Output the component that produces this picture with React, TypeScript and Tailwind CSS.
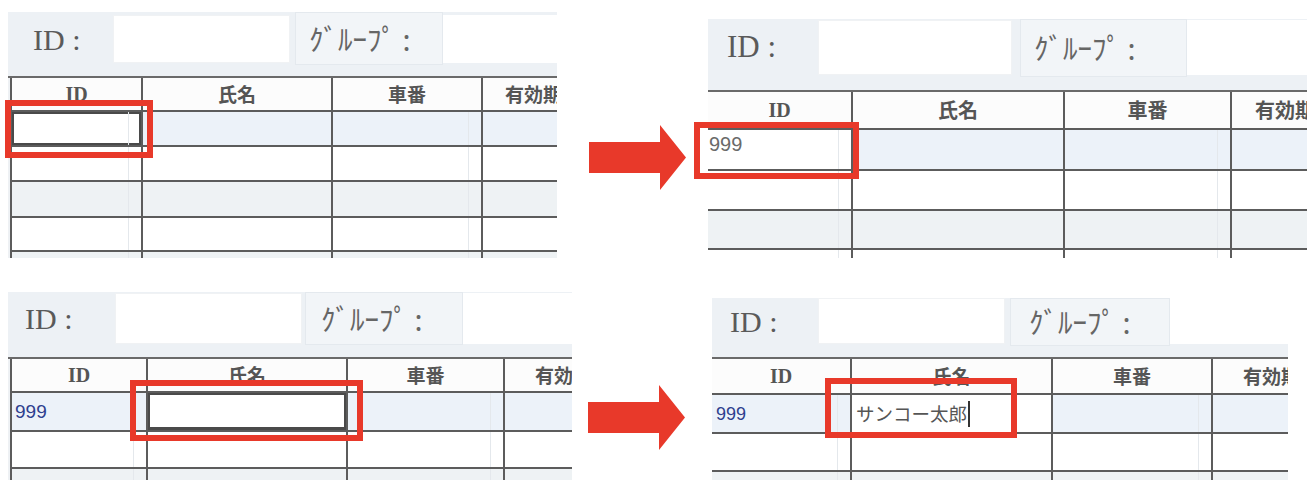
import React from "react";

const serif = { fontFamily: '"Liberation Serif", "Times New Roman", serif' };
const jp = { fontFamily: '"Noto Sans CJK JP", "Noto Sans", sans-serif' };
const sans = { fontFamily: '"Liberation Sans", Arial, sans-serif' };

type PanelProps = {
  outer: string;
  headH: string;
  labelFont: string;
  idLabelW: string;
  inputY: string;
  inputW: string;
  gapW: string;
  groupCls: string;
  leftLine: boolean;
  cols: string[];
  lastPad: string;
  headRow: string;
  headFont: string;
  rows: string[];
  red: string;
  focus: "id" | "name" | null;
  idCell?: React.ReactNode;
  nameCell?: React.ReactNode;
  idWhite?: boolean;
  nameWhite?: boolean;
};

const rowBg = ["bg-[#ecf2f9]", "bg-white", "bg-[#eef2f4]", "bg-white", "bg-[#eef2f4]"];

const Panel: React.FC<PanelProps> = (p) => {
  return (
    <div className={`relative shrink-0 ${p.outer}`}>
      <div className="w-full h-full overflow-hidden bg-[#e7ebef] flex flex-col">
        {/* search bar */}
        <div className={`flex shrink-0 bg-[#edf1f5] ${p.headH}`}>
          <div className={`flex items-center shrink-0 text-[#5a5a5a] ${p.idLabelW} ${p.inputY} ${p.labelFont}`} style={serif}>
            ID :
          </div>
          <div className={`shrink-0 bg-white border border-[#f0f2f4] ${p.inputW} ${p.inputY}`} />
          <div className={`shrink-0 ${p.gapW}`} />
          <div className={`shrink-0 flex items-center bg-[#f2f5f8] border border-[#e4e9ee] text-[#666] text-[29px] ${p.groupCls}`} style={jp}>
            ｸﾞﾙｰﾌﾟ :
          </div>
          <div className={`flex-1 bg-white ${p.inputY}`} />
        </div>

        {/* grid */}
        <div className={`flex-1 border-t-2 border-[#6a6a6a] ${p.leftLine ? "pl-[2px] bg-[#eef1f4]" : "bg-white"}`}>
          <div className={`h-full ${p.leftLine ? "border-l-2 border-[#5c5c5c]" : ""}`}>
            <div className={`flex border-b-2 border-[#5c5c5c] bg-[#fcfcfc] text-[#555] ${p.headRow}`}>
              <div className={`shrink-0 flex items-center justify-center border-r-2 border-[#5c5c5c] font-bold text-[20px] ${p.cols[0]}`} style={serif}>
                ID
              </div>
              <div className={`shrink-0 flex items-center justify-center border-r-2 border-[#5c5c5c] font-bold ${p.headFont} ${p.cols[1]}`} style={jp}>
                氏名
              </div>
              <div className={`shrink-0 flex items-center justify-center border-r-2 border-[#5c5c5c] font-bold ${p.headFont} ${p.cols[2]}`} style={jp}>
                車番
              </div>
              <div className={`shrink-0 flex items-center whitespace-nowrap font-bold ${p.headFont} ${p.cols[3]} ${p.lastPad}`} style={jp}>
                有効期限
              </div>
            </div>

            {p.rows.map((h, i) => (
              <div key={i} className={`flex border-b-2 border-[#5c5c5c] ${rowBg[i]} ${h}`}>
                <div
                  className={`shrink-0 flex items-center border-r-2 border-[#5c5c5c] ${p.cols[0]} ${
                    i === 0 && p.idWhite ? "bg-white" : ""
                  } ${i === 0 && p.focus === "id" ? "bg-white shadow-[inset_0_0_0_2px_#4a4a4a]" : ""}`}
                >
                  <div className="flex-1 h-full flex items-center border-r border-[#e4e8ec] mr-[12px]">
                    {i === 0 ? p.idCell : null}
                  </div>
                </div>
                <div
                  className={`shrink-0 flex items-center border-r-2 border-[#5c5c5c] ${p.cols[1]} ${
                    i === 0 && p.nameWhite ? "bg-white" : ""
                  } ${i === 0 && p.focus === "name" ? "bg-white shadow-[inset_2px_2px_0_0_#4a4a4a,inset_-2px_-3px_0_0_#4a4a4a]" : ""}`}
                >
                  {i === 0 ? p.nameCell : null}
                </div>
                <div className={`shrink-0 flex border-r-2 border-[#5c5c5c] ${p.cols[2]}`}>
                  <div className="flex-1 border-r border-[#e4e8ec] mr-[12px]" />
                </div>
                <div className={`shrink-0 ${p.cols[3]}`} />
              </div>
            ))}
          </div>
        </div>
      </div>
      <div className={`absolute border-[6px] border-[#e8392a] ${p.red}`} />
    </div>
  );
};

const Arrow: React.FC<{ cls: string }> = ({ cls }) => (
  <svg className={`shrink-0 ${cls}`} width="97" height="65" viewBox="0 0 97 65">
    <polygon points="0,17 71,17 71,0 97,32.5 71,65 71,48 0,48" fill="#e8392a" />
  </svg>
);

export default function App() {
  return (
    <div className="w-[1313px] h-[483px] bg-white overflow-hidden flex flex-col">
      <div className="flex items-start h-[258px] shrink-0">
        <Panel
          outer="ml-[8px] mt-[12px] w-[549px] h-[246px]"
          headH="h-[64px]"
          labelFont="text-[30px]"
          idLabelW="w-[105px] pl-[25px]"
          inputY="mt-[3px] h-[48px]"
          inputW="w-[177px]"
          gapW="w-[5px]"
          groupCls="w-[148px] h-[53px] pl-[13px]"
          leftLine
          cols={["w-[131px]", "w-[190px]", "w-[150px]", "w-[120px]"]}
          lastPad="pl-[22px]"
          headRow="h-[34px]"
          headFont="text-[19px]"
          rows={["h-[35px]", "h-[35px]", "h-[36px]", "h-[34px]", "h-[35px]"]}
          red="-left-[3px] top-[88px] w-[148px] h-[58px]"
          focus="id"
        />
        <Arrow cls="ml-[32px] mt-[125px]" />
        <Panel
          outer="ml-[22px] mt-[19px] w-[599px] h-[239px]"
          headH="h-[71px]"
          labelFont="text-[31px]"
          idLabelW="w-[110px] pl-[19px]"
          inputY="mt-[1px] h-[55px]"
          inputW="w-[194px]"
          gapW="w-[8px]"
          groupCls="w-[167px] h-[58px] pl-[13px]"
          leftLine={false}
          cols={["w-[145px]", "w-[212px]", "w-[167px]", "w-[120px]"]}
          lastPad="pl-[23px]"
          headRow="h-[38px]"
          headFont="text-[20px]"
          rows={["h-[41px]", "h-[40px]", "h-[39px]", "h-[40px]"]}
          red="-left-[14px] top-[103px] w-[165px] h-[57px]"
          focus={null}
          idWhite
          idCell={
            <span className="self-start pt-[4px] pl-[1px] text-[20px] leading-none text-[#6a6a6a]" style={sans}>
              999
            </span>
          }
        />
      </div>

      <div className="flex items-start h-[225px] shrink-0">
        <Panel
          outer="ml-[8px] mt-[34px] w-[564px] h-[188px]"
          headH="h-[65px]"
          labelFont="text-[30px]"
          idLabelW="w-[107px] pl-[17px]"
          inputY="mt-[1px] h-[51px]"
          inputW="w-[187px]"
          gapW="w-[3px]"
          groupCls="w-[158px] h-[53px] pl-[15px]"
          leftLine
          cols={["w-[136px]", "w-[200px]", "w-[157px]", "w-[120px]"]}
          lastPad="pl-[30px]"
          headRow="h-[34px]"
          headFont="text-[19px]"
          rows={["h-[39px]", "h-[37px]", "h-[38px]"]}
          red="left-[122px] top-[88px] w-[233px] h-[61px]"
          focus="name"
          idCell={
            <span className="pl-[3px] text-[19px] leading-none text-[#2e3f8f]" style={sans}>
              999
            </span>
          }
        />
        <Arrow cls="ml-[16px] mt-[127px]" />
        <Panel
          outer="ml-[27px] mt-[40px] w-[576px] h-[182px]"
          headH="h-[59px]"
          labelFont="text-[30px]"
          idLabelW="w-[106px] pl-[18px]"
          inputY="mt-[0px] h-[46px]"
          inputW="w-[187px]"
          gapW="w-[5px]"
          groupCls="w-[160px] h-[48px] pl-[18px]"
          leftLine={false}
          cols={["w-[140px]", "w-[201px]", "w-[160px]", "w-[120px]"]}
          lastPad="pl-[30px]"
          headRow="h-[36px]"
          headFont="text-[19px]"
          rows={["h-[39px]", "h-[38px]", "h-[38px]"]}
          red="left-[113px] top-[80px] w-[192px] h-[60px]"
          focus={null}
          nameWhite
          idCell={
            <span className="pl-[4px] text-[18px] leading-none text-[#2e3f8f]" style={sans}>
              999
            </span>
          }
          nameCell={
            <div className="flex items-center pl-[4px]">
              <span className="text-[18.5px] leading-none text-[#555]" style={jp}>
                サンコー太郎
              </span>
              <span className="ml-[1px] w-[2px] h-[26px] bg-[#333]" />
            </div>
          }
        />
      </div>
    </div>
  );
}
